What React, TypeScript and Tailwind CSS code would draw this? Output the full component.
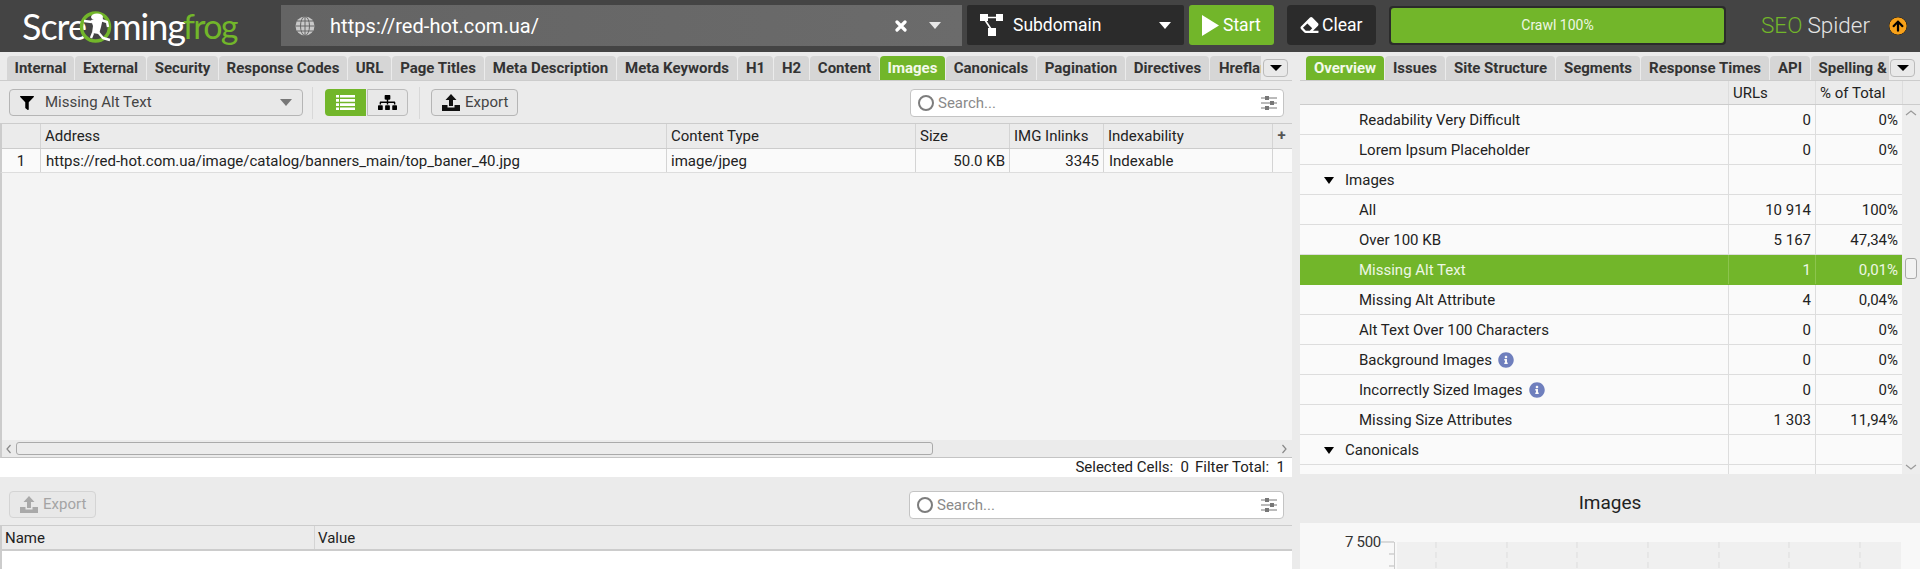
import { FaFilter, FaSitemap, FaInfoCircle, FaArrowCircleUp, FaEraser } from "react-icons/fa";

const GREEN = "#72b62a";

const leftTabs = [
  { label: "Internal", w: "w-[67px]" },
  { label: "External", w: "w-[71px]" },
  { label: "Security", w: "w-[71px]" },
  { label: "Response Codes", w: "w-[128px]" },
  { label: "URL", w: "w-[43px]" },
  { label: "Page Titles", w: "w-[92px]" },
  { label: "Meta Description", w: "w-[131px]" },
  { label: "Meta Keywords", w: "w-[120px]" },
  { label: "H1", w: "w-[35px]" },
  { label: "H2", w: "w-[35px]" },
  { label: "Content", w: "w-[69px]" },
  { label: "Images", w: "w-[65px]", active: true },
  { label: "Canonicals", w: "w-[90px]" },
  { label: "Pagination", w: "w-[88px]" },
  { label: "Directives", w: "w-[83px]" },
  { label: "Hreflang", w: "w-[76px]" },
];

const rightTabs = [
  { label: "Overview", w: "w-[78px]", active: true },
  { label: "Issues", w: "w-[60px]" },
  { label: "Site Structure", w: "w-[109px]" },
  { label: "Segments", w: "w-[84px]" },
  { label: "Response Times", w: "w-[128px]" },
  { label: "API", w: "w-[40px]" },
  { label: "Spelling & Grammar", w: "w-[150px]" },
];

const overview = [
  { name: "Readability Very Difficult", urls: "0", pct: "0%" },
  { name: "Lorem Ipsum Placeholder", urls: "0", pct: "0%" },
  { name: "Images", group: true },
  { name: "All", urls: "10 914", pct: "100%" },
  { name: "Over 100 KB", urls: "5 167", pct: "47,34%" },
  { name: "Missing Alt Text", urls: "1", pct: "0,01%", selected: true },
  { name: "Missing Alt Attribute", urls: "4", pct: "0,04%" },
  { name: "Alt Text Over 100 Characters", urls: "0", pct: "0%" },
  { name: "Background Images", urls: "0", pct: "0%", info: true },
  { name: "Incorrectly Sized Images", urls: "0", pct: "0%", info: true },
  { name: "Missing Size Attributes", urls: "1 303", pct: "11,94%" },
  { name: "Canonicals", group: true },
  { name: "All", urls: "", pct: "" },
];

function Tab({ label, w, active }: { label: string; w: string; active?: boolean }) {
  return (
    <div
      className={`${w} h-6 shrink-0 rounded-t-[4px] pt-[1px] text-center text-[15px] font-bold leading-[23px] whitespace-nowrap overflow-hidden ${
        active ? "bg-[#72b62a] text-[#f4f9ec]" : "bg-[#d6d6d6] text-[#333]"
      }`}
    >
      {label}
    </div>
  );
}

function MoreButton() {
  return (
    <div className="w-[25px] h-[18px] shrink-0 rounded-[4px] border border-[#bbb] bg-[#e9e9e9] flex items-center justify-center">
      <div className="w-0 h-0 border-x-[6px] border-x-transparent border-t-[6px] border-t-black" />
    </div>
  );
}

function Caret({ color }: { color: string }) {
  return (
    <svg width="12" height="7" viewBox="0 0 12 7" className="shrink-0">
      <path d="M0 0h12L6 7z" fill={color} />
    </svg>
  );
}

function UploadIcon({ color }: { color: string }) {
  return (
    <svg width="18" height="17" viewBox="0 0 18 17" className="shrink-0">
      <path d="M9 0l5.5 6H11v6H7V6H3.5z" fill={color} />
      <path d="M0 11h5.5v2.5h7V11H18v6H0z" fill={color} />
    </svg>
  );
}

function SearchBox({ width }: { width: string }) {
  return (
    <div className={`${width} h-7 rounded-[4px] border border-[#c4c4c4] bg-white flex items-center pl-[7px] pr-[6px]`}>
      <div className="w-[16px] h-[16px] rounded-full border-2 border-[#7d7d7d] mr-[4px] shrink-0" />
      <span className="text-[15px] text-[#8a8a8a] flex-1 pt-[1px]">Search...</span>
      <svg width="16" height="14" viewBox="0 0 16 14">
        <path d="M0 2h16M0 7h16M0 12h16" stroke="#777" strokeWidth="1" />
        <rect x="4" y="0" width="4" height="4" fill="#777" />
        <rect x="9" y="5" width="4" height="4" fill="#777" />
        <rect x="4" y="10" width="4" height="4" fill="#777" />
      </svg>
    </div>
  );
}

function Logo() {
  return (
    <div className="ml-[22px] w-[258px] h-[41px] flex items-center font-['Lato',sans-serif] text-[36px] leading-none tracking-[-1px] text-white">
      <span className="w-[57px] shrink-0">Scre</span>
      <svg width="33" height="32" viewBox="0 0 33 32" className="shrink-0 mt-[2px]">
        <circle cx="16.5" cy="16" r="14" fill="none" stroke={GREEN} strokeWidth="3.5" />
        <ellipse cx="18" cy="6" rx="6" ry="3.5" fill="#fff" />
        <path d="M12 9L24 7 22 16 20 23 13 22 14 15z" fill="#fff" />
        <path
          d="M22 9l6 2 1 5M13 11L5 10M19 21l5 6 7 2M14 22l-2 5"
          fill="none"
          stroke="#fff"
          strokeWidth="2.4"
          strokeLinejoin="round"
        />
      </svg>
      <span className="w-[71px] shrink-0">ming</span>
      <span className="text-[#72b62a] text-[34px] tracking-[-1.7px]">frog</span>
    </div>
  );
}

function Header() {
  return (
    <div className="h-[52px] bg-[#444] flex items-start pt-[5px] shrink-0">
      <Logo />
      <div className="w-[681px] h-[41px] ml-[1px] bg-gradient-to-r from-[#646464] to-[#6b6b6b] flex items-center pl-[14px] pr-[21px]">
        <svg width="20" height="20" viewBox="0 0 20 20" className="shrink-0">
          <circle cx="10" cy="10" r="9.5" fill="#c9c9c9" />
          <path d="M10 .5v19M.5 10h19M2 5h16M2 15h16" stroke="#666" strokeWidth="1" />
          <ellipse cx="10" cy="10" rx="4.5" ry="9.5" fill="none" stroke="#666" strokeWidth="1" />
        </svg>
        <span className="ml-[15px] flex-1 text-[20px] text-white tracking-[0.05px]">https://red-hot.com.ua/</span>
        <svg width="12" height="12" viewBox="0 0 12 12" className="shrink-0 mr-[22px]">
          <path d="M2 2l8 8M10 2l-8 8" stroke="#fff" strokeWidth="3.2" strokeLinecap="round" />
        </svg>
        <Caret color="#e8e8e8" />
      </div>
      <div className="w-[217px] h-10 ml-[5px] rounded-[2px] bg-[#2b2b2b] flex items-center pl-[13px] pr-[13px]">
        <svg width="23" height="22" viewBox="0 0 23 22" className="shrink-0">
          <rect x="0" y="0" width="8" height="7" fill="#fff" />
          <rect x="16" y="0" width="7" height="7" fill="#fff" />
          <rect x="8" y="14" width="8" height="8" fill="#fff" />
          <path d="M7 3.5h10M5 6l6 9" stroke="#fff" strokeWidth="1.6" />
        </svg>
        <span className="ml-[10px] flex-1 text-[17.5px] text-white">Subdomain</span>
        <Caret color="#fff" />
      </div>
      <div className="w-[85px] h-10 ml-[5px] rounded-[3px] bg-[#72b62a] flex items-center pl-[13px]">
        <svg width="17" height="21" viewBox="0 0 17 21" className="shrink-0">
          <path d="M0 0l17 10.5L0 21z" fill="#fff" />
        </svg>
        <span className="ml-[4px] text-[17.5px] text-white">Start</span>
      </div>
      <div className="w-[89px] h-10 ml-[13px] rounded-[4px] bg-[#2b2b2b] flex items-center pl-[12px]">
        <FaEraser className="text-white w-[21px] h-[18px] shrink-0" />
        <span className="ml-[2px] text-[17.5px] text-white">Clear</span>
      </div>
      <div className="w-[337px] h-[39px] ml-[13px] mt-[1px] rounded-[4px] bg-[#2b2b2b] p-[2px]">
        <div className="h-[35px] rounded-[3px] bg-[#72b62a] flex items-center justify-center text-[14px] text-[#eef7e4]">
          Crawl 100%
        </div>
      </div>
      <div className="ml-[35px] w-[128px] h-10 flex items-center text-[22.5px] font-light leading-none">
        <span className="text-[#72b62a]">SEO</span>
        <span className="ml-[5px] text-[#e4e4e4]">Spider</span>
      </div>
      <FaArrowCircleUp className="mt-[12px] w-[18px] h-[18px] text-[#f7a11a] bg-black rounded-full" />
    </div>
  );
}

function Toolbar() {
  return (
    <div className="h-[43px] flex items-center pl-[9px] pr-[8px] pt-[1px] bg-[#ebebeb] border-b border-[#ccc]">
      <div className="w-[294px] h-[27px] rounded-[4px] border border-[#b5b5b5] bg-[#e8e8e8] flex items-center pl-[10px] pr-[10px]">
        <FaFilter className="w-[14px] h-[14px] text-black shrink-0" />
        <span className="ml-[11px] flex-1 text-[15px] text-[#444]">Missing Alt Text</span>
        <Caret color="#777" />
      </div>
      <div className="w-px h-8 bg-[#d8d8d8] ml-[9px]" />
      <div className="w-[41px] h-[27px] ml-[12px] rounded-l-[4px] bg-[#72b62a] flex items-center justify-center">
        <svg width="19" height="15" viewBox="0 0 19 15">
          <path d="M0 1.2h3M4 1.2h15M0 5.4h3M4 5.4h15M0 9.6h3M4 9.6h15M0 13.8h3M4 13.8h15" stroke="#fff" strokeWidth="2.6" />
        </svg>
      </div>
      <div className="w-[41px] h-[27px] ml-[1px] rounded-r-[4px] border border-[#bbb] bg-[#e8e8e8] flex items-center justify-center">
        <FaSitemap className="w-[19px] h-[17px] text-black" />
      </div>
      <div className="w-px h-8 bg-[#d8d8d8] ml-[11px]" />
      <div className="w-[87px] h-[27px] ml-[11px] rounded-[4px] border border-[#b5b5b5] bg-[#e8e8e8] flex items-center pl-[10px]">
        <UploadIcon color="#111" />
        <span className="ml-[5px] text-[15px] text-[#444]">Export</span>
      </div>
      <div className="flex-1" />
      <SearchBox width="w-[374px]" />
    </div>
  );
}

function LeftPanel() {
  const cell = "h-full shrink-0 border-r border-[#d4d4d4] flex items-center text-[15px] pt-[1px] whitespace-nowrap";
  return (
    <div className="w-[1292px] shrink-0 flex flex-col">
      <div className="h-[25px] flex items-start pl-[7px] border-b border-[#ccc] gap-[1px]">
        <div className="w-[1254px] flex gap-[1px] overflow-hidden">
          {leftTabs.map((t) => (
            <Tab key={t.label} {...t} />
          ))}
        </div>
        <div className="mt-[3px] ml-[1px]">
          <MoreButton />
        </div>
      </div>
      <Toolbar />
      <div className="h-[25px] flex bg-[#ebebeb] border-b border-[#ccc] border-l-2 border-l-[#ccc] text-[#222]">
        <div className={`${cell} w-[39px]`} />
        <div className={`${cell} w-[626px] pl-[4px]`}>Address</div>
        <div className={`${cell} w-[249px] pl-[4px]`}>Content Type</div>
        <div className={`${cell} w-[94px] pl-[4px]`}>Size</div>
        <div className={`${cell} w-[94px] pl-[4px]`}>IMG Inlinks</div>
        <div className={`${cell} w-[169px] pl-[4px]`}>Indexability</div>
        <div className="w-[17px] text-center text-[15px] font-bold leading-[22px] text-[#555]">+</div>
      </div>
      <div className="h-[24px] flex bg-[#fafafa] border-b border-[#ddd] border-l-2 border-l-[#ccc] text-[#222]">
        <div className={`${cell} w-[39px] justify-center`}>1</div>
        <div className={`${cell} w-[626px] pl-[5px]`}>https://red-hot.com.ua/image/catalog/banners_main/top_baner_40.jpg</div>
        <div className={`${cell} w-[249px] pl-[4px]`}>image/jpeg</div>
        <div className={`${cell} w-[94px] justify-end pr-[4px]`}>50.0 KB</div>
        <div className={`${cell} w-[94px] justify-end pr-[4px]`}>3345</div>
        <div className={`${cell} w-[169px] pl-[5px]`}>Indexable</div>
      </div>
      <div className="h-[267px] bg-[#f4f4f4] border-l-2 border-l-[#ccc]" />
      <div className="h-[18px] bg-[#ebebeb] border-b border-[#c4c4c4] border-l-2 border-l-[#ccc] flex items-center pr-[2px] text-[#777]">
        <svg width="8" height="10" viewBox="0 0 8 10" className="ml-[3px] shrink-0">
          <path d="M5.5 1L2 5l3.5 4" fill="none" stroke="#888" strokeWidth="1.2" />
        </svg>
        <div className="w-[917px] h-[13px] ml-[3px] rounded-[3px] border border-[#aaa] bg-[#ececec]" />
        <div className="flex-1" />
        <svg width="8" height="10" viewBox="0 0 8 10" className="mr-[2px] shrink-0">
          <path d="M2.5 1L6 5 2.5 9" fill="none" stroke="#888" strokeWidth="1.2" />
        </svg>
      </div>
      <div className="h-[19px] bg-white flex items-center justify-end pr-[7px] text-[15px] text-[#222] gap-[6px]">
        <span>Selected Cells:&nbsp; 0</span>
        <span>Filter Total:&nbsp; 1</span>
      </div>
      <div className="h-[49px] bg-[#ebebeb] border-b border-[#ccc] flex items-center pl-[9px] pr-[8px] pt-[7px]">
        <div className="w-[87px] h-[27px] rounded-[4px] border border-[#d4d4d4] bg-[#e8e8e8] flex items-center pl-[10px]">
          <UploadIcon color="#a9a9a9" />
          <span className="ml-[5px] text-[15px] text-[#a4a4a4]">Export</span>
        </div>
        <div className="flex-1" />
        <SearchBox width="w-[375px]" />
      </div>
      <div className="h-[25px] flex bg-[#ebebeb] border-b-2 border-[#ccc] border-l-2 border-l-[#ccc] text-[#222]">
        <div className={`${cell} w-[313px] pl-[3px]`}>Name</div>
        <div className="flex items-center pl-[3px] text-[15px] pt-[1px]">Value</div>
      </div>
      <div className="flex-1 bg-white border-l-2 border-l-[#ccc]" />
    </div>
  );
}

function OverviewRow({ row }: { row: (typeof overview)[number] }) {
  const line = row.selected ? "border-[#8cc44e]" : "border-[#ddd]";
  return (
    <div
      className={`h-[30px] flex border-b text-[15px] ${
        row.selected ? "bg-[#72b62a] text-[#eef7e4] border-[#72b62a]" : "bg-[#fafafa] text-[#222] border-[#ddd]"
      }`}
    >
      <div className={`w-[428px] shrink-0 flex items-center pt-[1px] ${row.group ? "pl-[24px]" : "pl-[59px]"}`}>
        {row.group && (
          <div className="w-0 h-0 mr-[11px] border-x-[5px] border-x-transparent border-t-[7px] border-t-black" />
        )}
        <span>{row.name}</span>
        {row.info && <FaInfoCircle className="ml-[6px] w-[16px] h-[16px] text-[#6f7fbd]" />}
      </div>
      <div className={`w-[87px] shrink-0 border-l ${line} flex items-center justify-end pt-[1px] pr-[4px]`}>{row.urls}</div>
      <div className={`w-[87px] shrink-0 border-l ${line} flex items-center justify-end pt-[1px] pr-[4px]`}>{row.pct}</div>
    </div>
  );
}

function RightPanel() {
  return (
    <div className="flex-1 ml-[8px] flex flex-col min-w-0">
      <div className="h-[25px] flex items-start pl-[6px] border-b border-[#ccc]">
        <div className="w-[583px] flex gap-[1px] overflow-hidden">
          {rightTabs.map((t) => (
            <Tab key={t.label} {...t} />
          ))}
        </div>
        <div className="mt-[3px] ml-[1px]">
          <MoreButton />
        </div>
      </div>
      <div className="h-[24px] flex bg-[#ebebeb] border-b border-[#ccc] text-[15px] text-[#222]">
        <div className="w-[428px] shrink-0" />
        <div className="w-[87px] shrink-0 border-l border-[#ddd] pl-[4px] leading-[24px]">URLs</div>
        <div className="w-[87px] shrink-0 border-l border-[#ddd] pl-[4px] leading-[24px]">% of Total</div>
        <div className="flex-1 border-l border-[#ddd]" />
      </div>
      <div className="h-[369px] flex overflow-hidden">
        <div className="w-[602px] shrink-0">
          {overview.map((row, i) => (
            <OverviewRow key={i} row={row} />
          ))}
        </div>
        <div className="flex-1 bg-[#ededed] flex flex-col items-center pt-[4px]">
          <svg width="12" height="8" viewBox="0 0 12 8">
            <path d="M1 6l5-4 5 4" fill="none" stroke="#999" strokeWidth="1.2" />
          </svg>
          <div className="w-[12px] h-[21px] mt-[141px] rounded-[3px] border border-[#aaa] bg-[#f2f2f2]" />
          <div className="flex-1" />
          <svg width="12" height="8" viewBox="0 0 12 8" className="mb-[3px]">
            <path d="M1 2l5 4 5-4" fill="none" stroke="#999" strokeWidth="1.2" />
          </svg>
        </div>
      </div>
      <div className="h-[49px] bg-[#ebebeb] flex items-center justify-center text-[19px] text-[#222] pt-[9px]">Images</div>
      <div className="flex-1 bg-[#f8f8f8] flex items-start overflow-hidden">
        <div className="w-[81px] text-right text-[15px] leading-none text-[#333] tracking-[-0.3px] pt-[12px] shrink-0">7 500</div>
        <svg width="539" height="46" viewBox="0 0 539 46" className="shrink-0">
          <rect x="16" y="19" width="504" height="27" fill="#f0f0f0" />
          <path d="M13.5 19v27" stroke="#ccc" />
          <path d="M0 19h13M8 31h5M8 43h5" stroke="#bbb" />
          <path d="M55 19v27M126 19v27M196 19v27M267 19v27M338 19v27M408 19v27M479 19v27" stroke="#ddd" strokeDasharray="6 4" />
        </svg>
      </div>
    </div>
  );
}

export default function App() {
  return (
    <div className="w-[1920px] h-[569px] overflow-hidden flex flex-col bg-[#ebebeb] font-['Roboto',sans-serif]">
      <Header />
      <div className="h-[4px] shrink-0" />
      <div className="flex-1 flex min-h-0">
        <LeftPanel />
        <RightPanel />
      </div>
    </div>
  );
}
